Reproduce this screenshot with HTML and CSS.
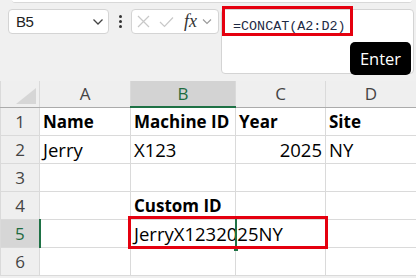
FILE: index.html
```html
<!DOCTYPE html>
<html>
<head>
<meta charset="utf-8">
<link rel="stylesheet" href="styles.css">
</head>
<body>
<div class="app">
  <div class="ribbon-edge"></div>
  <div class="toolbar">
    <div class="namebox">
      <span class="name">B5</span>
      <svg class="chev" width="12" height="8" viewBox="0 0 12 8"><path d="M1.5 1.5 L6 6 L10.5 1.5" fill="none" stroke="#444" stroke-width="1.3"/></svg>
    </div>
    <div class="dots"><span></span><span></span><span></span></div>
    <div class="fxbox">
      <svg width="13" height="13" viewBox="0 0 13 13"><path d="M1 1 L12 12 M12 1 L1 12" stroke="#c8c8c8" stroke-width="1.2" fill="none"/></svg>
      <svg width="15" height="12" viewBox="0 0 15 12"><path d="M1 6 L5.5 10.5 L14 1.5" stroke="#c8c8c8" stroke-width="1.2" fill="none"/></svg>
      <span class="fx">fx</span>
      <svg width="10" height="7" viewBox="0 0 10 7"><path d="M1 1.5 L5 5.5 L9 1.5" fill="none" stroke="#999" stroke-width="1.1"/></svg>
    </div>
    <div class="formula">
      <span class="ftext">=CONCAT(A2:D2)</span>
      <div class="redbox top"></div>
      <div class="enter">Enter</div>
    </div>
  </div>
  <table class="grid">
    <colgroup>
      <col class="c-rh"><col class="c-a"><col class="c-b"><col class="c-c"><col class="c-d">
    </colgroup>
    <tr class="hdr">
      <th class="corner"><div class="tri"></div></th>
      <th>A</th><th class="sel-col">B</th><th>C</th><th>D</th>
    </tr>
    <tr><th class="rh">1</th><td class="b">Name</td><td class="b">Machine ID</td><td class="b">Year</td><td class="b">Site</td></tr>
    <tr><th class="rh">2</th><td>Jerry</td><td>X123</td><td class="num">2025</td><td>NY</td></tr>
    <tr><th class="rh">3</th><td></td><td></td><td></td><td></td></tr>
    <tr><th class="rh">4</th><td></td><td class="b">Custom ID</td><td></td><td></td></tr>
    <tr><th class="rh sel-row">5</th><td></td><td class="active"><span class="spill">JerryX1232025NY</span><div class="cursor"></div><div class="redbox cell"></div></td><td></td><td></td></tr>
    <tr><th class="rh">6</th><td></td><td></td><td></td><td></td></tr>
  </table>
</div>
</body>
</html>
```
FILE: styles.css
```css
* { box-sizing: border-box; }
html, body { margin: 0; padding: 0; }
body { background: #f0f0f0; width: 416px; height: 278px; overflow: hidden; font-family: "Open Sans", "Liberation Sans", sans-serif; }
.app { position: relative; }
.ribbon-edge { height: 3px; background: #fff; border-bottom: 1px solid #d8d8d8; margin: 0 4px 0 12px; border-radius: 0 0 4px 4px; }
.toolbar { display: flex; align-items: flex-start; height: 78px; padding-top: 6px; }
.namebox { margin-left: 8px; width: 101px; height: 25px; background: #fff; border: 1px solid #d4d4d4; border-radius: 4px; display: flex; align-items: center; justify-content: space-between; padding: 0 4px 0 7px; }
.name { font-family: "Liberation Sans", sans-serif; font-size: 15px; color: #222; letter-spacing: -0.5px; }
.chev { margin-top: 1px; }
.dots { width: 22px; height: 25px; display: flex; flex-direction: column; align-items: center; justify-content: center; gap: 2px; }
.dots span { width: 3px; height: 3px; background: #333; border-radius: 50%; }
.fxbox { width: 88px; height: 25px; background: #fff; border: 1px solid #d4d4d4; border-radius: 4px; display: flex; align-items: center; padding-left: 5px; gap: 9px; }
.fx { font-family: "Liberation Serif", serif; font-style: italic; font-size: 18px; color: #333; margin-left: 1px; margin-right: -4px; }
.formula { position: relative; margin-left: 2px; width: 193px; height: 65px; background: #fff; border: 1px solid #d4d4d4; border-radius: 4px; padding: 3px 0 0 11px; }
.ftext { font-family: "Liberation Mono", monospace; font-size: 13.4px; color: #1d2a44; line-height: 22px; }
.redbox { position: absolute; border: 3px solid #e5000f; pointer-events: none; }
.redbox.top { left: 0; top: -4px; width: 131px; height: 30px; }
.enter { position: absolute; left: 128px; top: 32px; width: 61px; height: 33px; background: #000; color: #fff; border-radius: 5px; font-family: "Open Sans", sans-serif; font-size: 16.5px; display: flex; align-items: center; justify-content: center; }

.grid { border-collapse: collapse; table-layout: fixed; width: 416px; background: #fff; }
.c-rh { width: 39px; } .c-a { width: 91px; } .c-b { width: 105px; } .c-c { width: 90px; } .c-d { width: 91px; }
.grid td, .grid th { border: 1px solid #dadada; padding: 0; height: 28px; overflow: visible; white-space: nowrap; }
.grid tr:first-child th { border-top: none; }
.grid td:last-child { border-right: none; }
.hdr th { height: 26px; background: #efefef; font-weight: normal; font-size: 17px; color: #444; border-bottom: 1px solid #ababab; }
.hdr th.sel-col { background: #d3d3d3; color: #1e6b3f; border-bottom: 2px solid #1e7145; }
.corner { position: relative; border-left: none; }
.tri { position: absolute; right: 3px; bottom: 3px; width: 0; height: 0; border-left: 20px solid transparent; border-bottom: 16px solid #d6d6d6; }
.rh { background: #efefef; font-weight: normal; font-size: 17px; color: #444; border-left: none; border-right: 1px solid #ababab; }
.rh.sel-row { background: #d6d6d6; color: #1e6b3f; border-right: 2px solid #1e7145; }
.grid td { font-size: 18.5px; color: #000; padding-left: 3px; position: relative; }
.grid td.b { font-weight: bold; font-size: 17px; }
.grid td.num { text-align: right; padding-right: 3px; }
.active { overflow: visible; }
.spill { position: relative; z-index: 1; }
.cursor { position: absolute; right: -2px; top: -1px; width: 2px; height: 29px; background: #1e7145; z-index: 2; }
.cursor::after { content: ""; position: absolute; left: -1px; bottom: -3px; width: 4px; height: 4px; background: #1e7145; }
.redbox.cell { left: -3px; top: -4px; width: 200px; height: 33px; z-index: 3; }
```
